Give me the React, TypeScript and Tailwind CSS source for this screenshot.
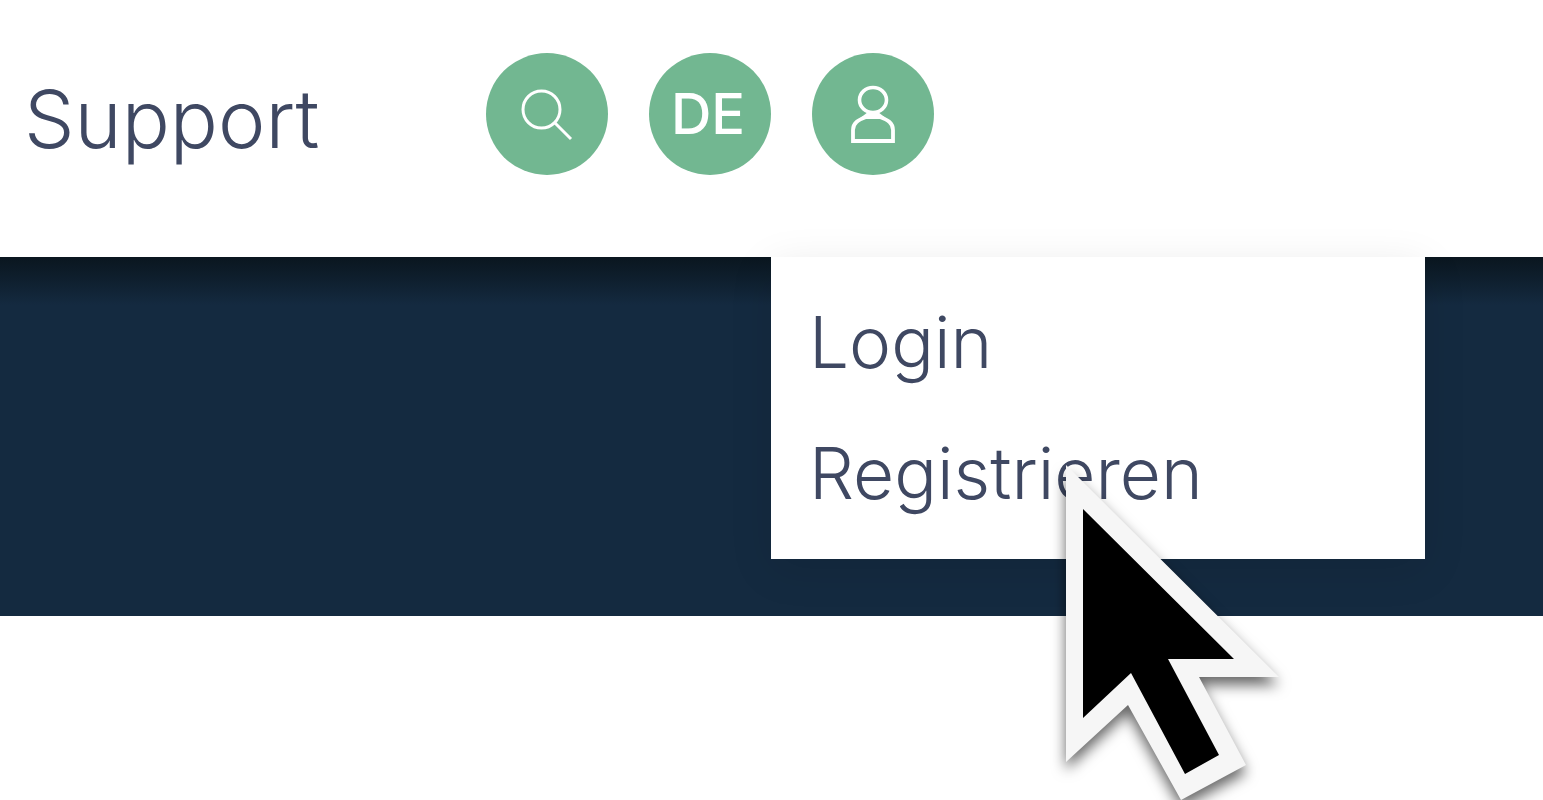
const roundButton =
  "flex size-[122px] shrink-0 items-center justify-center rounded-full bg-[#72b791] text-white";

function SearchIcon() {
  return (
    <svg viewBox="0 0 122 122" className="size-full" fill="none" stroke="currentColor" strokeWidth="3" aria-hidden="true">
      <circle cx="55.5" cy="56.5" r="18.5" />
      <path d="M68 69L85 86" />
    </svg>
  );
}

function UserIcon() {
  return (
    <svg viewBox="0 0 122 122" className="size-full" fill="none" stroke="currentColor" aria-hidden="true">
      <ellipse cx="61" cy="47" rx="13.5" ry="12.5" strokeWidth="3.6" />
      <path d="M41 88V77C41 70 46 67 54 64H68C76 67 81 70 81 77V88Z" strokeWidth="3.8" />
      <path d="M47 66L56 59H66L75 66Z" fill="currentColor" stroke="none" />
    </svg>
  );
}

function Cursor() {
  return (
    <svg
      viewBox="0 0 280 380"
      className="pointer-events-none absolute top-[183px] left-[269px] h-[380px] w-[280px] drop-shadow-[0_8px_7px_rgba(0,0,0,0.6)]"
      aria-hidden="true"
    >
      <path d="M26 25L239 237H159L206 325L141 360L88 265L26 322Z" fill="#f6f6f6" />
      <path d="M43 69L194 219H128L179 315L145 334L91 233L43 278Z" fill="#000" />
    </svg>
  );
}

function AccountMenu() {
  return (
    <div className="absolute top-[204px] -left-[41px] w-[654px] bg-white px-[38px] pt-[20px] pb-[20px] shadow-[0_10px_41px_rgba(0,0,0,0.1)]">
      <ul className="text-[71px] leading-[131px] font-light">
        <li><a href="#login">Login</a></li>
        <li><a href="#registrieren">Registrieren</a></li>
      </ul>
      <Cursor />
    </div>
  );
}

export default function App() {
  return (
    <div className="min-h-screen overflow-hidden bg-white font-['Inter',sans-serif] text-[#3f4862]">
      <header className="relative z-10 flex h-[257px] items-start bg-white pt-[53px] pl-6">
        <nav className="w-[462px] shrink-0">
          <a href="#support" className="text-[80px] leading-[131px] font-light">Support</a>
        </nav>
        <div className="flex gap-[41px]">
          <button type="button" aria-label="Suche" className={roundButton}>
            <SearchIcon />
          </button>
          <button type="button" className={`${roundButton} pr-1 text-[56px] leading-none font-medium`}>
            DE
          </button>
          <div className="relative">
            <button type="button" aria-label="Konto" aria-expanded="true" className={roundButton}>
              <UserIcon />
            </button>
            <AccountMenu />
          </div>
        </div>
      </header>
      <main>
        <div className="h-[359px] bg-[#142a40]">
          <div className="h-12 bg-linear-to-b from-[#0a161f] to-[#142a40]" />
        </div>
      </main>
    </div>
  );
}
